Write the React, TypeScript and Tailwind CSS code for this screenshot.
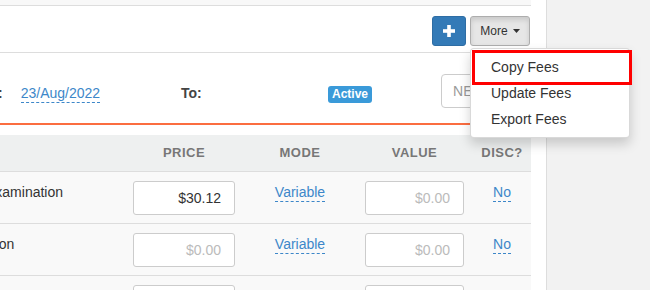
import React from 'react';

const Dashed = ({ children }: { children: React.ReactNode }) => (
  <span className="text-[#3d87c9] border-b border-dashed border-[#3d87c9] leading-[17px] inline-block">
    {children}
  </span>
);

const FeeInput = ({ value }: { value?: string }) => (
  <div className="w-[102px] h-[34px] bg-white border border-[#ccc] rounded-[3px] flex items-center justify-end pr-[13px] text-[14px]">
    {value ? <span className="text-[#333]">{value}</span> : <span className="text-[#bbb]">$0.00</span>}
  </div>
);

const rows = [
  { name: 'Examination', offset: '-ml-[14px]', price: '$30.12' },
  { name: 'Vaccination', offset: '-ml-[57px]', price: '' },
  { name: 'Consultation', offset: '-ml-[60px]', price: '' },
];

const App = () => {
  return (
    <div className="w-[650px] h-[290px] overflow-hidden bg-[#f2f2f2] flex font-['Liberation_Sans',Arial,sans-serif] text-[14px] text-[#333]">
      <div className="w-[547px] h-full bg-white border-r border-[#ddd] shrink-0">
        <div className="w-[531px] overflow-visible">
          {/* top strip */}
          <div className="h-[6px] bg-[#f8f8f8] border-b border-[#ddd]" />

          {/* toolbar */}
          <div className="h-[47px] border-b border-[#ddd] flex justify-end items-start pt-[10px] pr-[1px] gap-[4px]">
            <button className="w-[34px] h-[30px] bg-[#337ab7] border border-[#2e6da4] rounded-[3px] flex items-center justify-center">
              <svg width="12" height="12" viewBox="0 0 12 12">
                <rect x="0" y="4.2" width="12" height="3.6" fill="#fff" />
                <rect x="4.2" y="0" width="3.6" height="12" fill="#fff" />
              </svg>
            </button>
            <div className="relative">
              <button className="w-[60px] h-[30px] bg-[#e6e6e6] border border-[#adadad] rounded-[3px] flex items-center justify-center gap-[5px] text-[12px] text-[#333] shadow-[inset_0_3px_5px_rgba(0,0,0,0.125)]">
                More
                <svg width="7" height="4" viewBox="0 0 7 4">
                  <polygon points="0,0 7,0 3.5,4" fill="#333" />
                </svg>
              </button>
              {/* dropdown */}
              <div className="absolute left-0 top-full mt-[2px] w-[160px] bg-white border border-[rgba(0,0,0,0.15)] rounded-[4px] shadow-[0_6px_12px_rgba(0,0,0,0.175)] py-[5px] z-10">
                <div className="h-[26px] leading-[26px] px-[20px]">Copy Fees</div>
                <div className="h-[26px] leading-[26px] px-[20px]">Update Fees</div>
                <div className="h-[26px] leading-[26px] px-[20px]">Export Fees</div>
                <div className="absolute left-[1px] top-[1px] w-[160px] h-[35px] border-[3px] border-[#ff0000]" />
              </div>
            </div>
          </div>

          {/* filter row */}
          <div className="h-[72px] border-b-2 border-[#fb6d40] flex items-start pt-[21px] overflow-hidden">
            <div className="w-[181px] shrink-0 flex items-start mt-[9px] leading-[20px]">
              <span className="font-bold text-[#444] -ml-[37px]">From:</span>
              <span className="ml-[18px]">
                <Dashed>23/Aug/2022</Dashed>
              </span>
            </div>
            <div className="w-[147px] shrink-0 mt-[9px] leading-[20px] font-bold text-[#444]">To:</div>
            <div className="mt-[12px] shrink-0 h-[17px] px-[4px] bg-[#3a9ad9] rounded-[3px] text-white text-[12px] font-bold leading-[17px]">
              Active
            </div>
            <div className="ml-[69px] shrink-0 w-[100px] h-[34px] border border-[#ccc] rounded-[4px] flex items-center px-[11px] text-[#999]">
              NEW
            </div>
          </div>

          {/* table */}
          <div className="mt-[10px]">
            <div className="h-[37px] bg-[#eef0f0] border-b border-[#ddd] flex items-center text-[13px] font-bold text-[#777] tracking-[0.5px]">
              <div className="w-[133px]" />
              <div className="w-[102px] text-center">PRICE</div>
              <div className="w-[130px] text-center">MODE</div>
              <div className="w-[99px] text-center">VALUE</div>
              <div className="w-[67px] pl-[9px] text-center">DISC?</div>
            </div>
            {rows.map((r) => (
              <div key={r.name} className="h-[52px] bg-[#f9f9f9] border-b border-[#ddd] flex items-start pt-[9px]">
                <div className="w-[133px] overflow-hidden whitespace-nowrap leading-[20px] pt-[1px]">
                  <div className={r.offset}>{r.name}</div>
                </div>
                <FeeInput value={r.price} />
                <div className="w-[130px] text-center pt-[1px]">
                  <Dashed>Variable</Dashed>
                </div>
                <div className="w-[99px]">
                  <div className="w-[99px] h-[34px] bg-white border border-[#ccc] rounded-[3px] flex items-center justify-end pr-[13px] text-[#bbb]">
                    $0.00
                  </div>
                </div>
                <div className="w-[67px] pl-[9px] text-center pt-[1px]">
                  <Dashed>No</Dashed>
                </div>
              </div>
            ))}
          </div>
        </div>
      </div>
    </div>
  );
};

export default App;
